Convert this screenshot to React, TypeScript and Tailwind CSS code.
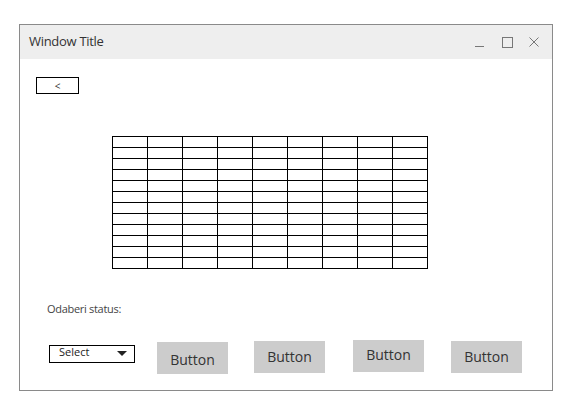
import React from 'react';

const ROWS = 12;
const COLS = 9;

const GrayButton: React.FC<{ className?: string }> = ({ className = '' }) => (
  <div className={`w-[71px] h-[32px] bg-[#cccccc] flex items-center justify-center text-[14px] text-[#333333] ${className}`}>
    Button
  </div>
);

const App: React.FC = () => {
  return (
    <div className="w-[575px] h-[413px] bg-white pl-[19px] pt-[24px]" style={{ fontFamily: '"Source Sans Pro", "Open Sans", "Noto Sans", sans-serif' }}>
      <div className="w-[534px] h-[367px] border border-[#8a8a8a] flex flex-col">
        {/* title bar */}
        <div className="h-[34px] bg-[#eeeeee] flex items-center pl-[9px] pr-[12px]">
          <span className="text-[13px] text-[#333333] tracking-[-0.3px]">Window Title</span>
          <div className="ml-auto flex items-center gap-[15px] text-[#777777]">
            <svg width="12" height="12" viewBox="0 0 12 12"><path d="M1 10.5h9" stroke="currentColor" strokeWidth="1" /></svg>
            <svg width="12" height="12" viewBox="0 0 12 12"><rect x="1.5" y="1.5" width="10" height="10" fill="none" stroke="currentColor" strokeWidth="1" /></svg>
            <svg width="12" height="12" viewBox="0 0 12 12"><path d="M1.5 1.5l9 9M10.5 1.5l-9 9" stroke="currentColor" strokeWidth="1" /></svg>
          </div>
        </div>

        {/* body */}
        <div className="flex-1 flex flex-col pl-[16px]">
          <div className="mt-[18px] w-[43px] h-[17px] border border-black flex items-center justify-center text-[10px] text-[#333333] leading-none">
            &lt;
          </div>

          <div className="mt-[42px] ml-[76px] w-[316px] border-t border-l border-black">
            {Array.from({ length: ROWS }).map((_, r) => (
              <div key={r} className="flex">
                {Array.from({ length: COLS }).map((_, c) => (
                  <div key={c} className="w-[35px] h-[11px] border-r border-b border-black" />
                ))}
              </div>
            ))}
          </div>

          <div className="mt-[32px] ml-[11px] text-[11px] text-[#444444] tracking-[-0.3px]">Odaberi status:</div>

          <div className="mt-[5px] flex items-start">
            <div className="mt-[22px] ml-[13px] w-[86px] h-[18px] border border-black flex items-center pl-[9px] pr-[7px] text-[11px] text-[#222222]">
              <span className="-mt-[2px]">Select</span>
              <svg className="ml-auto" width="10" height="6" viewBox="0 0 10 6"><path d="M0 0h10L5 5z" fill="#222222" /></svg>
            </div>
            <GrayButton className="ml-[22px] mt-[19px] pt-[4px]" />
            <GrayButton className="ml-[26px] mt-[18px]" />
            <GrayButton className="ml-[28px] mt-[17px] pb-[2px]" />
            <GrayButton className="ml-[27px] mt-[18px]" />
          </div>
        </div>
      </div>
    </div>
  );
};

export default App;
